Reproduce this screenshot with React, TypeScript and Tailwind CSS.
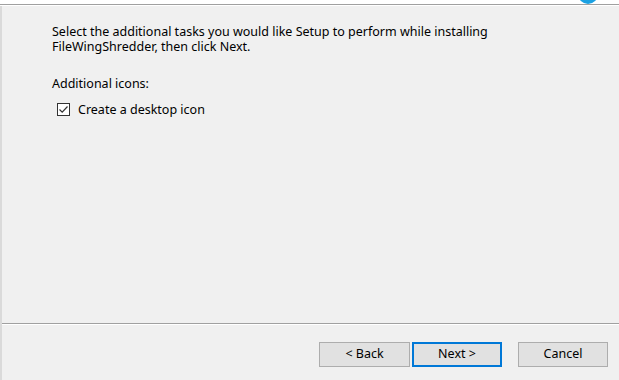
import React from 'react';

export default function App() {
  const font = { fontFamily: '"Noto Sans", "Open Sans", sans-serif' };
  return (
    <div className="w-[619px] h-[380px] bg-white overflow-hidden flex flex-col text-[12.5px] text-black" style={font}>
      {/* header strip */}
      <div className="h-[4px] bg-white relative shrink-0">
        <div className="absolute left-[578px] top-[-16px] w-[20px] h-[20px] rounded-full bg-[#1ba1e2]" />
      </div>
      <div className="h-[1px] bg-[#a0a0a0] shrink-0" />
      <div className="h-[1px] bg-[#ffffff] shrink-0" />

      <div className="flex-1 flex flex-col bg-[#f0f0f0] border-l-2 border-[#dadada]">
        {/* body */}
        <div className="h-[317px] pl-[50px] pt-[18px] leading-[15px]">
          <p>
            Select the additional tasks you would like Setup to perform while installing
            <br />
            FileWingShredder, then click Next.
          </p>
          <p className="mt-[22px]">Additional icons:</p>
          <label className="flex items-center gap-[8px] mt-[11px] ml-[5px]">
            <span className="w-[13px] h-[13px] border border-[#333] bg-white flex items-center justify-center">
              <svg width="11" height="11" viewBox="0 0 11 11">
                <path d="M1.5 5.5 L4.2 8.2 L9.5 2.5" fill="none" stroke="#333" strokeWidth="1.2" />
              </svg>
            </span>
            <span>Create a desktop icon</span>
          </label>
        </div>

        <div className="h-[1px] bg-[#a0a0a0]" />
        <div className="h-[1px] bg-white" />

        {/* footer */}
        <div className="flex-1 flex items-start justify-end gap-[2px] pt-[17px] pr-[11px]">
          <button className="w-[91px] h-[25px] bg-[#e1e1e1] border border-[#adadad] leading-none">&lt; Back</button>
          <button className="w-[90px] h-[25px] bg-[#e1e1e1] border-2 border-[#0078d7] leading-none">Next &gt;</button>
          <button className="w-[90px] h-[25px] bg-[#e1e1e1] border border-[#adadad] leading-none ml-[14px]">Cancel</button>
        </div>
      </div>
    </div>
  );
}
